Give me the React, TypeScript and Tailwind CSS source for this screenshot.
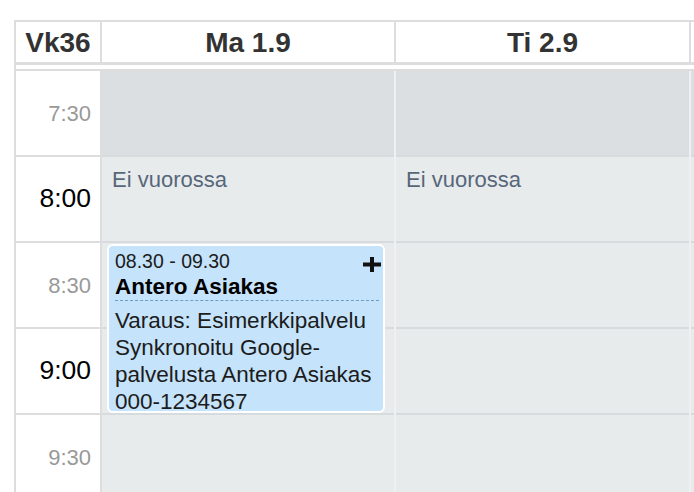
import React from 'react';

const rows = [
  { label: '7:30', hour: false },
  { label: '8:00', hour: true },
  { label: '8:30', hour: false },
  { label: '9:00', hour: true },
  { label: '9:30', hour: false },
];

const PlusIcon: React.FC = () => (
  <svg width="18" height="15" viewBox="0 0 18 15" className="block">
    <rect x="0" y="5.5" width="18" height="4" fill="#111" />
    <rect x="7" y="0" width="4" height="15" fill="#111" />
  </svg>
);

const DayColumn: React.FC<{ withEvent?: boolean; last?: boolean }> = ({ withEvent, last }) => {
  return (
    <div className={`relative flex flex-col ${last ? '' : 'border-r-2 border-[#eef0f1]'}`}>
      {rows.map((r, i) => (
        <div
          key={r.label}
          className={`h-[86px] shrink-0 border-b-2 border-[#d8dbde] ${i === 0 ? 'bg-[#dcdfe2]' : 'bg-[#e8ebec]'}`}
        >
          {i === 1 && !last && (
            <div className="pl-[10px] pt-[10px] text-[22px] leading-[26px] text-[#56677a]">Ei vuorossa</div>
          )}
        </div>
      ))}

      {withEvent && (
        <div className="absolute left-[5px] top-[173px] w-[278px] h-[169px] rounded-[6px] border-2 border-white bg-[#c5e3fa] px-[6px] pt-[2px] text-[#1c1c1c] overflow-hidden">
          <div className="absolute right-[2px] top-[11px]">
            <PlusIcon />
          </div>
          <div className="text-[19.5px] leading-[26px]">08.30 - 09.30</div>
          <div className="text-[22.5px] leading-[26px] font-bold text-black border-b border-dashed border-[#6f9cc4] mr-[-2px]">
            Antero Asiakas
          </div>
          <div className="pt-[6px] text-[22.5px] leading-[27px]">
            <div>Varaus: Esimerkkipalvelu</div>
            <div>Synkronoitu Google-palvelusta Antero Asiakas 000-1234567</div>
          </div>
        </div>
      )}
    </div>
  );
};

const App: React.FC = () => {
  return (
    <div className="w-[694px] h-[492px] overflow-hidden bg-white pl-[14px] pt-[20px] font-['Liberation_Sans',Arial,sans-serif]">
      <div className="border-l-2 border-[#dddddd] w-[680px]">
        {/* header */}
        <div className="grid grid-cols-[86px_294px_295px_1fr] h-[45px] border-t-2 border-b-[3px] border-[#dddddd] text-[28px] font-bold text-[#333333]">
          <div className="flex items-center justify-center border-r-2 border-[#dddddd]">Vk36</div>
          <div className="flex items-center justify-center border-r-2 border-[#dddddd]">Ma 1.9</div>
          <div className="flex items-center justify-center border-r-2 border-[#dddddd]">Ti 2.9</div>
          <div />
        </div>

        <div className="h-[4px]" />

        {/* body */}
        <div className="grid grid-cols-[86px_294px_295px_1fr] border-t-2 border-[#dddddd]">
          <div className="flex flex-col border-r-2 border-[#dddddd] bg-white">
            {rows.map((r) => (
              <div
                key={r.label}
                className="h-[86px] shrink-0 border-b-2 border-[#dddddd] flex items-center justify-end pr-[9px]"
              >
                <span className={r.hour ? 'text-[26.5px] text-black' : 'text-[22px] text-[#999999]'}>{r.label}</span>
              </div>
            ))}
          </div>
          <DayColumn withEvent />
          <DayColumn />
          <DayColumn last />
        </div>
      </div>
    </div>
  );
};

export default App;
